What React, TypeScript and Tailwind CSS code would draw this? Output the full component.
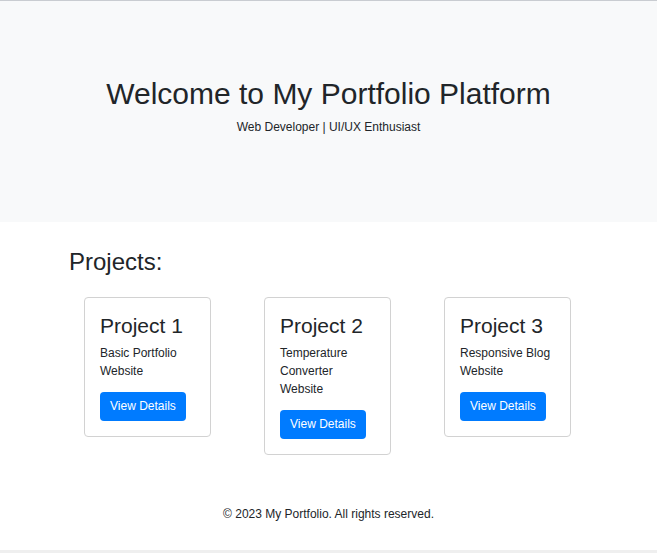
const projects = [
  { title: "Project 1", text: "Basic Portfolio Website" },
  { title: "Project 2", text: "Temperature Converter Website" },
  { title: "Project 3", text: "Responsive Blog Website" },
];

const ProjectCard = ({ title, text }: { title: string; text: string }) => {
  return (
    <div className="w-[127px] border border-[#d2d2d2] rounded-[4px] bg-white p-[15px]">
      <h3 className="text-[21px] leading-[24px] pt-[1px]">{title}</h3>
      <p className="text-[12px] leading-[18px] mt-[6px]">{text}</p>
      <button className="mt-[12px] h-[29px] px-[10px] rounded-[4px] bg-[#007bff] text-white text-[12px] leading-[18px] pb-[1px]">
        View Details
      </button>
    </div>
  );
};

export default function App() {
  return (
    <div className="min-h-[553px] bg-white text-[#212529] font-['Liberation_Sans',Arial,sans-serif] border-t border-[#c9ccd1] border-b-[3px] border-b-[#efefef]">
      <header className="h-[221px] bg-[#f8f9fa] flex flex-col items-center pt-[75px]">
        <h1 className="text-[30px] leading-[36px]">Welcome to My Portfolio Platform</h1>
        <p className="text-[12px] leading-[18px] mt-[6px]">Web Developer | UI/UX Enthusiast</p>
      </header>

      <section className="pl-[69px] pt-[25px]">
        <h2 className="text-[24px] leading-[29px]">Projects:</h2>
        <div className="flex items-start gap-[53px] ml-[15px] mt-[21px]">
          {projects.map((p) => (
            <ProjectCard key={p.title} title={p.title} text={p.text} />
          ))}
        </div>
      </section>

      <footer className="pt-[50px] pb-[27px] text-center text-[12px] leading-[18px]">
        © 2023 My Portfolio. All rights reserved.
      </footer>
    </div>
  );
}
